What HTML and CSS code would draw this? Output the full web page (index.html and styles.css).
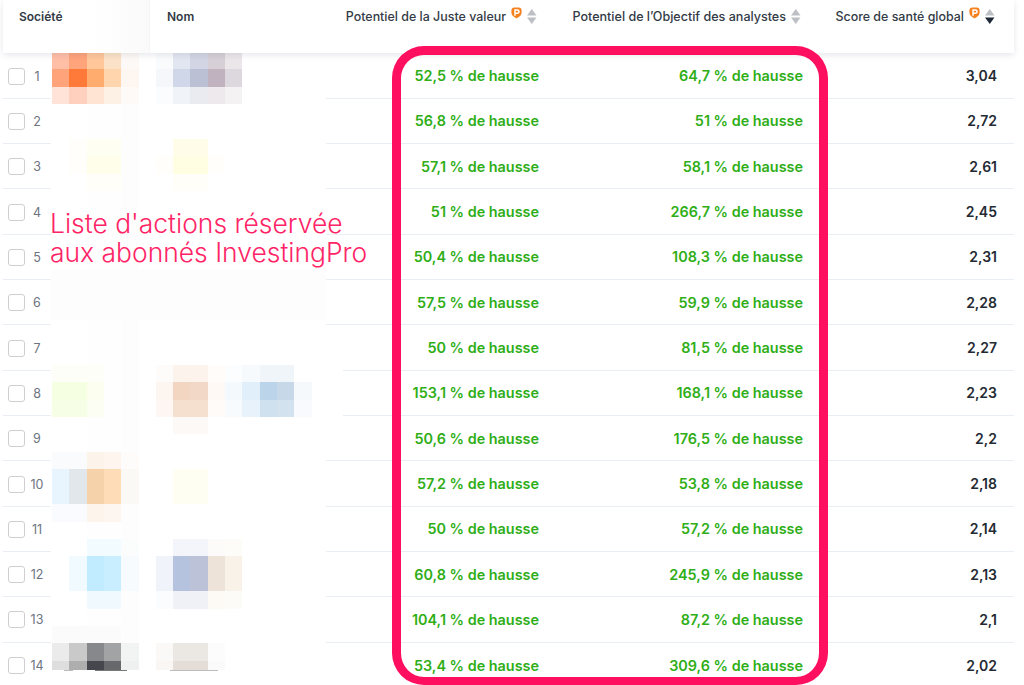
FILE: index.html
```html
<!DOCTYPE html>
<html lang="fr">
<head>
<meta charset="utf-8">
<title>Liste d'actions InvestingPro</title>
<link rel="stylesheet" href="styles.css">
</head>
<body>
<main class="page">
  <svg width="0" height="0" class="defs" aria-hidden="true">
    <defs>
      <g id="pro">
        <path d="M.4 3.4Q.4 .4 3.4 .4H7.6Q10.6 .4 10.6 3.4V5.8Q10.6 8 8.4 9.6L5.5 11.6 2.6 9.6Q.4 8 .4 5.8Z" fill="#f5811f"/>
        <path d="M4 8.8V2.9H6.2Q8 2.9 8 4.6T6.2 6.3H4" fill="none" stroke="#fff" stroke-width="1.5"/>
      </g>
      <g id="sort">
        <path d="M4.75 0L9.5 6.5H0Z" fill="#bcbfc4"/>
        <path d="M0 8.5H9.5L4.75 15Z" fill="#bcbfc4"/>
      </g>
      <g id="sort-active">
        <path d="M4.75 0L9.5 6.5H0Z" fill="#bcbfc4"/>
        <path d="M0 8.5H9.5L4.75 15Z" fill="#1f2937"/>
      </g>
    </defs>
  </svg>

  <section class="table">
    <header class="row head">
      <div class="cell first"><span class="label soc">Société</span></div>
      <div class="cell"><span class="label nom">Nom</span></div>
      <div class="cell end fair">
        <span class="label">Potentiel de la Juste valeur</span>
        <svg class="pro" width="11" height="12"><use href="#pro"/></svg>
        <svg class="sort" width="10" height="15"><use href="#sort"/></svg>
      </div>
      <div class="cell end target">
        <span class="label">Potentiel de l’Objectif des analystes</span>
        <svg class="sort" width="10" height="15"><use href="#sort"/></svg>
      </div>
      <div class="cell end score">
        <span class="label">Score de santé global</span>
        <svg class="pro" width="11" height="12"><use href="#pro"/></svg>
        <svg class="sort" width="10" height="15"><use href="#sort-active"/></svg>
      </div>
    </header>

    <div class="row"><div class="cell first"><span class="check"></span><span class="num">1</span></div><div class="cell"></div><div class="cell end up">52,5 % de hausse</div><div class="cell end up">64,7 % de hausse</div><div class="cell end val">3,04</div></div>
    <div class="row"><div class="cell first"><span class="check"></span><span class="num">2</span></div><div class="cell"></div><div class="cell end up">56,8 % de hausse</div><div class="cell end up">51 % de hausse</div><div class="cell end val">2,72</div></div>
    <div class="row"><div class="cell first"><span class="check"></span><span class="num">3</span></div><div class="cell"></div><div class="cell end up">57,1 % de hausse</div><div class="cell end up">58,1 % de hausse</div><div class="cell end val">2,61</div></div>
    <div class="row"><div class="cell first"><span class="check"></span><span class="num">4</span></div><div class="cell"></div><div class="cell end up">51 % de hausse</div><div class="cell end up">266,7 % de hausse</div><div class="cell end val">2,45</div></div>
    <div class="row"><div class="cell first"><span class="check"></span><span class="num">5</span></div><div class="cell"></div><div class="cell end up">50,4 % de hausse</div><div class="cell end up">108,3 % de hausse</div><div class="cell end val">2,31</div></div>
    <div class="row"><div class="cell first"><span class="check"></span><span class="num">6</span></div><div class="cell"></div><div class="cell end up">57,5 % de hausse</div><div class="cell end up">59,9 % de hausse</div><div class="cell end val">2,28</div></div>
    <div class="row"><div class="cell first"><span class="check"></span><span class="num">7</span></div><div class="cell"></div><div class="cell end up">50 % de hausse</div><div class="cell end up">81,5 % de hausse</div><div class="cell end val">2,27</div></div>
    <div class="row"><div class="cell first"><span class="check"></span><span class="num">8</span></div><div class="cell"></div><div class="cell end up">153,1 % de hausse</div><div class="cell end up">168,1 % de hausse</div><div class="cell end val">2,23</div></div>
    <div class="row"><div class="cell first"><span class="check"></span><span class="num">9</span></div><div class="cell"></div><div class="cell end up">50,6 % de hausse</div><div class="cell end up">176,5 % de hausse</div><div class="cell end val">2,2</div></div>
    <div class="row"><div class="cell first"><span class="check"></span><span class="num">10</span></div><div class="cell"></div><div class="cell end up">57,2 % de hausse</div><div class="cell end up">53,8 % de hausse</div><div class="cell end val">2,18</div></div>
    <div class="row"><div class="cell first"><span class="check"></span><span class="num">11</span></div><div class="cell"></div><div class="cell end up">50 % de hausse</div><div class="cell end up">57,2 % de hausse</div><div class="cell end val">2,14</div></div>
    <div class="row"><div class="cell first"><span class="check"></span><span class="num">12</span></div><div class="cell"></div><div class="cell end up">60,8 % de hausse</div><div class="cell end up">245,9 % de hausse</div><div class="cell end val">2,13</div></div>
    <div class="row"><div class="cell first"><span class="check"></span><span class="num">13</span></div><div class="cell"></div><div class="cell end up">104,1 % de hausse</div><div class="cell end up">87,2 % de hausse</div><div class="cell end val">2,1</div></div>
    <div class="row"><div class="cell first"><span class="check"></span><span class="num">14</span></div><div class="cell"></div><div class="cell end up">53,4 % de hausse</div><div class="cell end up">309,6 % de hausse</div><div class="cell end val">2,02</div></div>
  </section>

  <svg class="mosaic" width="1024" height="685" shape-rendering="crispEdges" aria-hidden="true">
    <rect x="51" y="53" width="275" height="617" fill="#fff"/>
    <rect x="326" y="365" width="17" height="51" fill="#fff"/>
    <rect x="87" y="53" width="52" height="616" fill="#fefefe"/>
    <rect x="122" y="53" width="17" height="616" fill="#fdfdfd"/>
    <rect x="51" y="270" width="275" height="50" fill="#fdfdfd"/>
    <rect x="64" y="669" width="9" height="2" fill="#bbb"/>
    <rect x="95" y="669" width="32" height="2" fill="#777"/>
    <rect x="170" y="669" width="48" height="2" fill="#bbb"/>
    <g transform="translate(52 51.7) scale(17.3 17.4)">
      <g id="r0">
        <rect x="0" y="0" width="1" height="1" fill="#ffbfa6"/><rect x="1" y="0" width="1" height="1" fill="#ffa47b"/><rect x="2" y="0" width="1" height="1" fill="#ffc79a"/><rect x="3" y="0" width="1" height="1" fill="#fbe2c6"/><rect x="4" y="0" width="1" height="1" fill="#fdf9f6"/><rect x="6" y="0" width="1" height="1" fill="#fafbfd"/><rect x="7" y="0" width="1" height="1" fill="#e2e6f1"/><rect x="8" y="0" width="1" height="1" fill="#d2d5e3"/><rect x="9" y="0" width="1" height="1" fill="#d6cfd6"/><rect x="10" y="0" width="1" height="1" fill="#ebe6ea"/>
        <rect x="0" y="1" width="1" height="1" fill="#ffa37a"/><rect x="1" y="1" width="1" height="1" fill="#ff7a38"/><rect x="2" y="1" width="1" height="1" fill="#ffac6e"/><rect x="3" y="1" width="1" height="1" fill="#fed5ac"/><rect x="4" y="1" width="1" height="1" fill="#fdf6f1"/><rect x="6" y="1" width="1" height="1" fill="#f5f7fb"/><rect x="7" y="1" width="1" height="1" fill="#d0d7e8"/><rect x="8" y="1" width="1" height="1" fill="#bcc0d4"/><rect x="9" y="1" width="1" height="1" fill="#c0b2bf"/><rect x="10" y="1" width="1" height="1" fill="#ddd7de"/>
        <rect x="0" y="2" width="1" height="1" fill="#ffe2d8"/><rect x="1" y="2" width="1" height="1" fill="#ffd0bd"/><rect x="2" y="2" width="1" height="1" fill="#ffe4d3"/><rect x="3" y="2" width="1" height="1" fill="#fdf1e5"/><rect x="4" y="2" width="1" height="1" fill="#fdfaf8"/><rect x="6" y="2" width="1" height="1" fill="#fbfcfd"/><rect x="7" y="2" width="1" height="1" fill="#f0f3f8"/><rect x="8" y="2" width="1" height="1" fill="#e9ebf1"/><rect x="9" y="2" width="1" height="1" fill="#eee9ed"/><rect x="10" y="2" width="1" height="1" fill="#f5f2f4"/>
      </g>
      <g id="r3">
        <rect x="1" y="5" width="1" height="2" fill="#fffefa"/><rect x="2" y="5" width="2" height="1" fill="#fffef2"/><rect x="7" y="5" width="2" height="1" fill="#fffdea"/>
        <rect x="2" y="6" width="2" height="1" fill="#fffeea"/><rect x="7" y="6" width="2" height="1" fill="#fffde2"/><rect x="6" y="6" width="1" height="1" fill="#fffefa"/><rect x="9" y="6" width="1" height="1" fill="#fffefa"/>
        <rect x="2" y="7" width="2" height="1" fill="#fffef8"/><rect x="7" y="7" width="2" height="1" fill="#fffef8"/>
      </g>
      <g id="r8">
        <rect x="0" y="18" width="3" height="1" fill="#fefef9"/><rect x="6" y="18" width="1" height="1" fill="#fefcfa"/><rect x="7" y="18" width="2" height="1" fill="#fcf3ec"/><rect x="9" y="18" width="1" height="1" fill="#fffcfa"/><rect x="10" y="18" width="1" height="1" fill="#fbfdfe"/><rect x="11" y="18" width="1" height="1" fill="#f6fafd"/><rect x="12" y="18" width="2" height="1" fill="#f0f5fa"/>
        <rect x="0" y="19" width="2" height="1" fill="#f5ffe2"/><rect x="2" y="19" width="1" height="1" fill="#fcfef0"/><rect x="6" y="19" width="1" height="1" fill="#fdf5f0"/><rect x="7" y="19" width="1" height="1" fill="#f3d6c2"/><rect x="8" y="19" width="1" height="1" fill="#f2d8c6"/><rect x="9" y="19" width="1" height="1" fill="#fff9f5"/><rect x="10" y="19" width="1" height="1" fill="#f4f9fd"/><rect x="11" y="19" width="1" height="1" fill="#e0eff9"/><rect x="12" y="19" width="1" height="1" fill="#bcd4ea"/><rect x="13" y="19" width="1" height="1" fill="#c7d8e8"/><rect x="14" y="19" width="1" height="1" fill="#f5f9fc"/>
        <rect x="0" y="20" width="2" height="1" fill="#f6ffe6"/><rect x="2" y="20" width="1" height="1" fill="#fcfef4"/><rect x="6" y="20" width="1" height="1" fill="#fdf6f2"/><rect x="7" y="20" width="2" height="1" fill="#f5dfce"/><rect x="9" y="20" width="1" height="1" fill="#fffbf8"/><rect x="10" y="20" width="1" height="1" fill="#f7fbfe"/><rect x="11" y="20" width="1" height="1" fill="#e8f2fa"/><rect x="12" y="20" width="1" height="1" fill="#cfe0ef"/><rect x="13" y="20" width="1" height="1" fill="#d2e2ef"/><rect x="14" y="20" width="1" height="1" fill="#f8fafd"/>
        <rect x="7" y="21" width="2" height="1" fill="#fdf9f6"/>
      </g>
      <g id="r10">
        <rect x="0" y="23" width="2" height="1" fill="#fafbfc"/><rect x="2" y="23" width="1" height="1" fill="#fcf3ea"/><rect x="3" y="23" width="1" height="1" fill="#fdf5ee"/><rect x="4" y="23" width="1" height="1" fill="#fdfcfa"/>
        <rect x="0" y="24" width="1" height="2" fill="#e8f4fe"/><rect x="1" y="24" width="1" height="2" fill="#e2e7ec"/><rect x="2" y="24" width="1" height="2" fill="#f5d2aa"/><rect x="3" y="24" width="1" height="2" fill="#fedcb8"/><rect x="4" y="24" width="1" height="2" fill="#fbf9f5"/><rect x="7" y="24" width="2" height="2" fill="#fffef2"/>
        <rect x="0" y="26" width="2" height="1" fill="#fafbfe"/><rect x="2" y="26" width="1" height="1" fill="#fdf4ec"/><rect x="3" y="26" width="1" height="1" fill="#fdf6f0"/>
      </g>
      <g id="r12">
        <rect x="2" y="28" width="2" height="1" fill="#f2fbff"/><rect x="4" y="28" width="1" height="1" fill="#fbfdfd"/><rect x="7" y="28" width="2" height="1" fill="#f3f5fa"/><rect x="9" y="28" width="1" height="1" fill="#fdfafa"/><rect x="10" y="28" width="1" height="1" fill="#fefcf9"/>
        <rect x="1" y="29" width="1" height="2" fill="#f0faff"/><rect x="2" y="29" width="1" height="2" fill="#c1ebff"/><rect x="3" y="29" width="1" height="2" fill="#c8eeff"/><rect x="4" y="29" width="1" height="2" fill="#f7fbfd"/><rect x="6" y="29" width="1" height="2" fill="#f0f3f9"/><rect x="7" y="29" width="1" height="2" fill="#b6c3de"/><rect x="8" y="29" width="1" height="2" fill="#bcc3d8"/><rect x="9" y="29" width="1" height="2" fill="#ede3d8"/><rect x="10" y="29" width="1" height="2" fill="#f9f2e8"/>
        <rect x="2" y="31" width="2" height="1" fill="#f0f9fe"/><rect x="6" y="31" width="1" height="1" fill="#fbfcfd"/><rect x="7" y="31" width="2" height="1" fill="#eff1f7"/><rect x="9" y="31" width="1" height="1" fill="#fdf9f5"/><rect x="10" y="31" width="1" height="1" fill="#fdfbf8"/>
      </g>
      <g id="r14">
        <rect x="0" y="33" width="4" height="1" fill="#fbfbfb"/>
        <rect x="0" y="34" width="1" height="1" fill="#ebebeb"/><rect x="1" y="34" width="1" height="1" fill="#c9c9c9"/><rect x="2" y="34" width="1" height="1" fill="#87888b"/><rect x="3" y="34" width="1" height="1" fill="#a2a3a5"/><rect x="4" y="34" width="1" height="1" fill="#f2f3f3"/><rect x="6" y="34" width="1" height="1" fill="#fbf9f7"/><rect x="7" y="34" width="2" height="1" fill="#ebe7e3"/><rect x="9" y="34" width="1" height="1" fill="#fcfcfc"/>
        <rect x="0" y="35" width="1" height=".55" fill="#dedede"/><rect x="1" y="35" width="1" height=".55" fill="#aeaeae"/><rect x="2" y="35" width="1" height=".55" fill="#45474c"/><rect x="3" y="35" width="1" height=".55" fill="#66686c"/><rect x="4" y="35" width="1" height=".55" fill="#eff0f0"/><rect x="6" y="35" width="1" height=".55" fill="#f9f6f3"/><rect x="7" y="35" width="2" height=".55" fill="#e5ddd7"/><rect x="9" y="35" width="1" height=".55" fill="#fafafa"/>
      </g>
    </g>
  </svg>

  <p class="notice">Liste d'actions réservée<br>aux abonnés InvestingPro</p>
  <div class="frame"></div>
</main>
</body>
</html>
```

FILE: styles.css
```css
* {
  box-sizing: border-box;
}

html,
body {
  margin: 0;
  height: 100%;
  background: #fff;
  overflow: hidden;
}

body {
  font-family: Inter, "Liberation Sans", sans-serif;
  color: #232a33;
}

.page {
  position: relative;
  width: 1024px;
  height: 685px;
  overflow: hidden;
}

.defs {
  position: absolute;
}

.table {
  margin-left: 3px;
  width: 1011px;
}

.row {
  display: grid;
  grid-template-columns: 150px 187px 209px 264px 201px;
  height: 45.33px;
  border-bottom: 1px solid #e9edf4;
}

.row:last-child {
  border-bottom: 0;
}

.head {
  position: relative;
  z-index: 2;
  height: 53px;
  margin-bottom: 0.4px;
  background: #fff;
  border-bottom: 0;
  box-shadow: 0 2px 6px rgba(60, 70, 100, 0.13);
  grid-template-columns: 147px 190px 209px 264px 201px;
}

.cell {
  display: flex;
  align-items: center;
  min-width: 0;
  font-size: 14px;
}

.end {
  justify-content: flex-end;
  white-space: nowrap;
  padding-right: 10px;
}

.val {
  padding-right: 17px;
  font-weight: 600;
  color: #232a33;
}

.up {
  font-size: 14.4px;
  font-weight: 600;
  color: #2fae17;
}

.first {
  padding-left: 5px;
  padding-top: 1px;
}

.head .cell {
  align-items: flex-start;
  padding-top: 9px;
}

.head .first {
  padding-left: 16px;
  border-right: 1px solid #f5f5f6;
  background: linear-gradient(90deg, #fff 58%, #fafafa);
}

.label {
  font-size: 12.45px;
  font-weight: 500;
  line-height: 15px;
  white-space: nowrap;
  color: #333b46;
}

.target .label {
  font-size: 12.55px;
}

.soc,
.nom {
  font-size: 12px;
  font-weight: 600;
}

.nom {
  margin-left: 17px;
}

.fair,
.target {
  padding-right: 12px;
}

.score {
  padding-right: 19px;
}

.pro {
  margin: -2px 0 0 5px;
}

.sort {
  margin-left: 5px;
}

.check {
  flex: none;
  width: 17px;
  height: 17px;
  background: #fff;
  border: 1.5px solid #cfcfd2;
  border-radius: 3px;
}

.num {
  width: 20px;
  text-align: center;
  margin-left: 2px;
  font-size: 12.5px;
  color: #6d7480;
}

.mosaic {
  position: absolute;
  left: 0;
  top: 0;
  z-index: 1;
}

.notice {
  position: absolute;
  left: 50px;
  top: 209px;
  z-index: 3;
  margin: 0;
  font-size: 26.45px;
  font-weight: 350;
  line-height: 29px;
  white-space: nowrap;
  color: #ff2466;
}

.frame {
  position: absolute;
  left: 392px;
  top: 46px;
  z-index: 3;
  width: 436px;
  height: 639px;
  border: 9px solid #ff0f5f;
  border-bottom-width: 8px;
  border-radius: 32px;
}
```
